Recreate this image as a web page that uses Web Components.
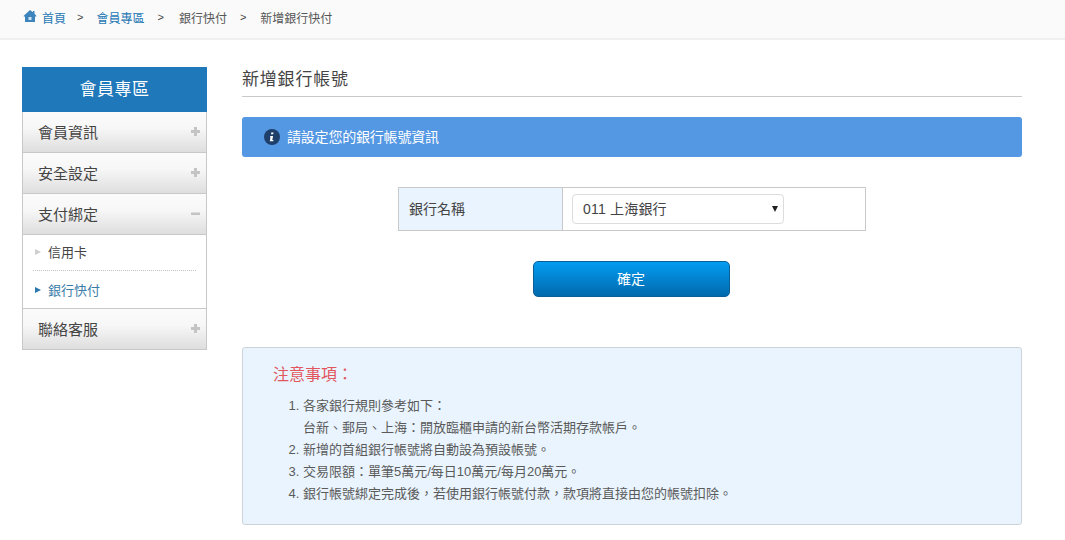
<!DOCTYPE html>
<html lang="zh-Hant">
<head>
<meta charset="utf-8">
<title>新增銀行帳號</title>
<style>
    html, body {
        margin: 0;
        background: #fff;
        font-family: "Liberation Sans", "Noto Sans CJK TC", sans-serif;
        color: #444;
    }
    .page {
        display: flex;
        gap: 35px;
        padding: 27px 43px 0 22px;
    }
</style>
</head>
<body>
<x-crumbs></x-crumbs>
<div class="page">
    <x-side-menu title-text="會員專區">
        <x-menu-item label="會員資訊"></x-menu-item>
        <x-menu-item label="安全設定"></x-menu-item>
        <x-menu-item label="支付綁定" opened>
            <x-sub-item>信用卡</x-sub-item>
            <x-sub-item active>銀行快付</x-sub-item>
        </x-menu-item>
        <x-menu-item label="聯絡客服"></x-menu-item>
    </x-side-menu>
    <x-bank-form></x-bank-form>
</div>

<template id="crumbs-tpl">
    <style>
        :host {
            display: flex;
            align-items: center;
            height: 34px;
            padding: 0 0 4px 23px;
            background: #fafafa;
            border-bottom: 2px solid #efefef;
            font-size: 12px;
            color: #555;
        }
        svg { width: 14px; height: 14px; margin-right: 5px; margin-top: -2px; }
        a { color: #1f78b4; text-decoration: none; }
        i { font-style: normal; color: #444; margin: 0 13px 0 11px; font-size: 11px; }
        i.mid { margin: 0 15px 0 13px; }
        i.last { margin: 0 14px 0 13px; }
    </style>
    <svg viewBox="0 0 14 14">
        <path fill="#3d84bd" d="M7 1 0.5 7l.7.8L2 7.2V13h10V7.2l.8.6.7-.8L11.5 4.700V2H10v1.300z"/>
        <rect x="5.500" y="8" width="3" height="3" fill="#cfe2f0"/>
    </svg>
    <a>首頁</a><i>&gt;</i>
    <a>會員專區</a><i class="mid">&gt;</i>
    <span>銀行快付</span><i class="last">&gt;</i>
    <span>新增銀行快付</span>
</template>

<template id="side-menu-tpl">
    <style>
        :host {
            display: block;
            flex: 0 0 185px;
            width: 185px;
            align-self: flex-start;
        }
        h2 {
            margin: 0;
            height: 45px;
            line-height: 45px;
            background: #1f78b9;
            color: #fff;
            font-size: 17px;
            letter-spacing: .5px;
            font-weight: normal;
            text-align: center;
        }
        .list {
            border: 1px solid #c8c8c8;
            border-top: 0;
        }
    </style>
    <h2></h2>
    <div class="list"><slot></slot></div>
</template>

<template id="menu-item-tpl">
    <style>
        :host { display: block; }
        .head {
            display: flex;
            align-items: center;
            justify-content: space-between;
            height: 40px;
            padding: 0 6px 0 15px;
            background: linear-gradient(#fbfbfb 0%, #f7f7f7 40%, #dedede 100%);
            border-bottom: 1px solid #c8c8c8;
            font-size: 15px;
            color: #444;
        }
        :host(:last-child) .head { border-bottom: 0; }
        .label { margin-bottom: 2px; }
        svg { width: 9px; height: 9px; margin-bottom: 2px; }
        .body {
            display: none;
            padding: 0 10px;
            background: #fff;
            border-bottom: 1px solid #c8c8c8;
        }
        :host([opened]) .body { display: block; }
    </style>
    <div class="head">
        <span class="label"></span>
        <svg viewBox="0 0 9 9"><path class="sign" fill="#c4c4c4"/></svg>
    </div>
    <div class="body"><slot></slot></div>
</template>

<template id="sub-item-tpl">
    <style>
        :host {
            display: flex;
            align-items: center;
            box-sizing: border-box;
            height: 36px;
            padding-bottom: 2px;
            font-size: 13px;
            color: #444;
        }
        :host(:first-child) { border-bottom: 1px dotted #c4c4c4; }
        :host([active]) { color: #3a7ca8; height: 37px; padding-bottom: 0; }
        b {
            width: 0;
            height: 0;
            margin: 0 7px 0 2px;
            border-left: 6px solid #cfcfcf;
            border-top: 3.500px solid transparent;
            border-bottom: 3.500px solid transparent;
        }
        :host([active]) b { border-left-color: #2a78ad; }
    </style>
    <b></b><slot></slot>
</template>

<template id="bank-form-tpl">
    <style>
        :host {
            display: block;
            flex: 1;
            min-width: 0;
        }
        h1 {
            margin: 0;
            height: 29px;
            font-size: 17px;
            line-height: 26px;
            font-weight: normal;
            letter-spacing: .8px;
            color: #444;
            border-bottom: 1px solid #c9c9c9;
        }
        .info {
            display: flex;
            align-items: center;
            box-sizing: border-box;
            height: 40px;
            margin-top: 20px;
            padding: 0 0 2px 22px;
            background: #5497e3;
            border-radius: 3px;
            color: #fff;
            font-size: 14px;
            letter-spacing: -.2px;
        }
        .info svg { width: 16px; height: 16px; margin: 2px 7px 0 0; }
        table {
            margin: 30px auto 0;
            width: 468px;
            border-collapse: collapse;
            font-size: 14px;
        }
        td { border: 1px solid #c9c9c9; height: 42px; padding: 0; }
        td.name {
            width: 164px;
            padding: 0 0 2px 10px;
            box-sizing: border-box;
            background: #e9f4fe;
        }
        td.value { padding-left: 9px; }
        .pick {
            position: relative;
            width: 212px;
            height: 30px;
        }
        select {
            appearance: none;
            width: 100%;
            height: 100%;
            padding: 0 0 0 10px;
            border: 1px solid #dcdcdc;
            border-radius: 4px;
            background: #fff;
            font: 14px "Liberation Sans", "Noto Sans CJK TC", sans-serif;
            letter-spacing: .2px;
            color: #444;
        }
        .pick::after {
            content: "";
            position: absolute;
            right: 6px;
            top: 12px;
            border-top: 6px solid #222;
            border-left: 3px solid transparent;
            border-right: 3px solid transparent;
        }
        .actions {
            display: flex;
            justify-content: center;
            margin-top: 30px;
            padding-right: 2px;
        }
        button {
            width: 197px;
            height: 36px;
            padding: 0 0 2px;
            border: 1px solid #0a5f98;
            border-radius: 5px;
            background: linear-gradient(#049cf0, #0169ad);
            color: #fff;
            font: 14px "Liberation Sans", "Noto Sans CJK TC", sans-serif;
        }
        .notes {
            margin-top: 50px;
            height: 178px;
            box-sizing: border-box;
            padding: 16px 30px 0;
            background: #e9f4fe;
            border: 1px solid #cdd3d8;
            border-radius: 3px;
        }
        h3 {
            margin: 0 0 9px;
            font-size: 16px;
            line-height: 22px;
            font-weight: normal;
            color: #e2565e;
        }
        ol {
            margin: 0;
            padding-left: 30px;
            font-size: 13px;
            line-height: 22px;
            color: #5a5a5a;
        }
    </style>
    <h1>新增銀行帳號</h1>
    <div class="info">
        <svg viewBox="0 0 16 16">
            <circle cx="8" cy="8" r="8" fill="#1f3f6b"/>
            <path fill="#fff" d="M7.300 3.500h2.200l-.3 1.800H7zM6.300 7h2.800l-.8 4h1.200l-.3 1.300H5.800l.7-4H6z"/>
        </svg>
        請設定您的銀行帳號資訊
    </div>
    <table>
        <tr>
            <td class="name">銀行名稱</td>
            <td class="value">
                <div class="pick">
                    <select><option>011 上海銀行</option></select>
                </div>
            </td>
        </tr>
    </table>
    <div class="actions"><button type="button">確定</button></div>
    <div class="notes">
        <h3>注意事項：</h3>
        <ol>
            <li>各家銀行規則參考如下：<br>台新、郵局、上海：開放臨櫃申請的新台幣活期存款帳戶。</li>
            <li>新增的首組銀行帳號將自動設為預設帳號。</li>
            <li>交易限額：單筆5萬元/每日10萬元/每月20萬元。</li>
            <li>銀行帳號綁定完成後，若使用銀行帳號付款，款項將直接由您的帳號扣除。</li>
        </ol>
    </div>
</template>

<script>
    function shadowFrom(el, id) {
        el.attachShadow({mode: "open"});
        el.shadowRoot.appendChild(document.getElementById(id).content.cloneNode(true));
    }

    class XCrumbs extends HTMLElement {
        constructor() {
            super();
            shadowFrom(this, "crumbs-tpl");
        }
    }

    class XSideMenu extends HTMLElement {
        constructor() {
            super();
            shadowFrom(this, "side-menu-tpl");
        }

        connectedCallback() {
            this.shadowRoot.querySelector("h2").textContent = this.getAttribute("title-text");
        }
    }

    class XMenuItem extends HTMLElement {
        constructor() {
            super();
            shadowFrom(this, "menu-item-tpl");
        }

        connectedCallback() {
            this.shadowRoot.querySelector(".label").textContent = this.getAttribute("label");
            const plus = "M3 0h3v3h3v3H6v3H3V6H0V3h3z";
            const minus = "M0 3.500h9v2.500H0z";
            this.shadowRoot.querySelector(".sign").setAttribute("d", this.hasAttribute("opened") ? minus : plus);
        }
    }

    class XSubItem extends HTMLElement {
        constructor() {
            super();
            shadowFrom(this, "sub-item-tpl");
        }
    }

    class XBankForm extends HTMLElement {
        constructor() {
            super();
            shadowFrom(this, "bank-form-tpl");
        }
    }

    customElements.define("x-crumbs", XCrumbs);
    customElements.define("x-side-menu", XSideMenu);
    customElements.define("x-menu-item", XMenuItem);
    customElements.define("x-sub-item", XSubItem);
    customElements.define("x-bank-form", XBankForm);
</script>
</body>
</html>
